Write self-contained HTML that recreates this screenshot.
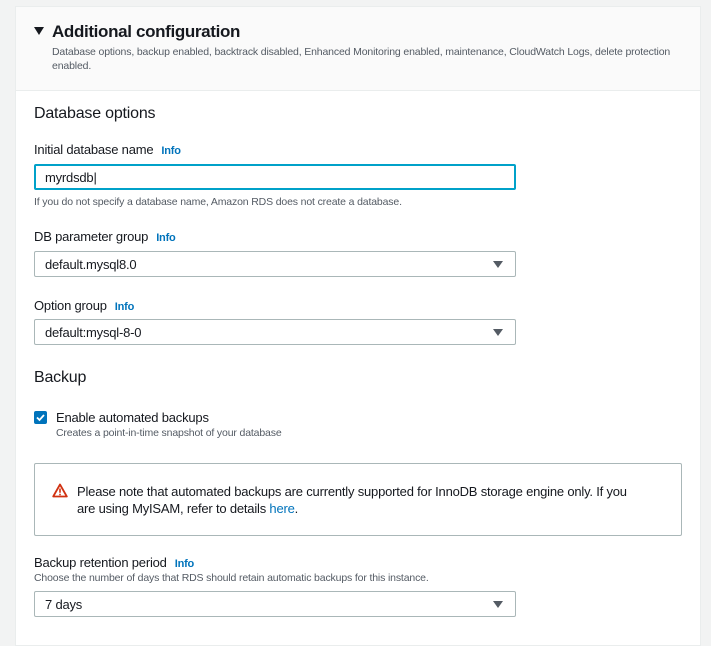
<!DOCTYPE html>
<html><head><meta charset="utf-8"><style>
*{margin:0;padding:0;box-sizing:border-box}
body{width:711px;height:628px;background:#f2f3f3;font-family:"Liberation Sans",sans-serif;color:#16191f;position:relative;overflow:hidden}
.panel{position:absolute;left:15px;top:6px;width:686px;height:640px;background:#fff;border:1px solid #eaeded}
.hdr{position:absolute;left:0;top:0;width:100%;height:84px;background:#fafafa;border-bottom:1px solid #eaeded}
.a{position:absolute;white-space:nowrap}
.h2{font-size:16px;letter-spacing:-0.2px}
.lbl{font-size:13px;letter-spacing:-0.2px}
.info{font-size:11px;font-weight:bold;color:#0073bb;margin-left:8px}
.sm{font-size:10.5px;color:#545b64;letter-spacing:-0.15px}
.box{position:absolute;left:34px;width:482px;height:26px;border:1px solid #aab7b8;border-radius:2px;font-size:13px;padding:5px 10px;letter-spacing:-0.2px}
.box .ar{position:absolute;right:12px;top:9px;width:0;height:0;border-left:5px solid transparent;border-right:5px solid transparent;border-top:7px solid #545b64}
</style></head><body>
<div class="panel"><div class="hdr"></div></div>
<div class="a" style="left:34px;top:27px;width:0;height:0;border-left:5px solid transparent;border-right:5px solid transparent;border-top:8px solid #16191f"></div>
<div class="a" style="left:52px;top:22px;font-size:17px;font-weight:bold;letter-spacing:-0.35px">Additional configuration</div>
<div class="a sm" style="left:52px;top:45px;line-height:14px;white-space:normal;width:630px">Database options, backup enabled, backtrack disabled, Enhanced Monitoring enabled, maintenance, CloudWatch Logs, delete protection enabled.</div>
<div class="a h2" style="left:34px;top:105px">Database options</div>
<div class="a lbl" style="left:34px;top:142px">Initial database name<span class="info">Info</span></div>
<div class="box" style="top:164px;border:2px solid #00a1c9;padding:4px 9px">myrdsdb<span style="font-weight:100">|</span></div>
<div class="a sm" style="left:34px;top:196px">If you do not specify a database name, Amazon RDS does not create a database.</div>
<div class="a lbl" style="left:34px;top:229px">DB parameter group<span class="info">Info</span></div>
<div class="box" style="top:251px">default.mysql8.0<div class="ar"></div></div>
<div class="a lbl" style="left:34px;top:298px">Option group<span class="info">Info</span></div>
<div class="box" style="top:319px">default:mysql-8-0<div class="ar"></div></div>
<div class="a h2" style="left:34px;top:369px">Backup</div>
<div class="a" style="left:34px;top:411px;width:13px;height:13px;background:#0073bb;border-radius:2px"><svg width="13" height="13" viewBox="0 0 13 13"><path d="M3 6.5l2.5 2.5L10 4" fill="none" stroke="#fff" stroke-width="1.8"/></svg></div>
<div class="a lbl" style="left:56px;top:410px">Enable automated backups</div>
<div class="a sm" style="left:56px;top:427px">Creates a point-in-time snapshot of your database</div>
<div class="a" style="left:34px;top:463px;width:648px;height:73px;border:1px solid #aab7b8;border-radius:2px"></div>
<svg class="a" style="left:52px;top:483px" width="16" height="15" viewBox="0 0 16 15"><path d="M8 1.5L14.8 13.5H1.2Z" fill="none" stroke="#d13212" stroke-width="1.8" stroke-linejoin="round"/><path d="M8 5.5v4.2M8 10.8v1.4" stroke="#d13212" stroke-width="1.6"/></svg>
<div class="a lbl" style="left:77px;top:483px;line-height:17px">Please note that automated backups are currently supported for InnoDB storage engine only. If you<br>are using MyISAM, refer to details <span style="color:#0073bb">here</span>.</div>
<div class="a lbl" style="left:34px;top:555px">Backup retention period<span class="info">Info</span></div>
<div class="a sm" style="left:34px;top:572px">Choose the number of days that RDS should retain automatic backups for this instance.</div>
<div class="box" style="top:591px">7 days<div class="ar"></div></div>
</body></html>
